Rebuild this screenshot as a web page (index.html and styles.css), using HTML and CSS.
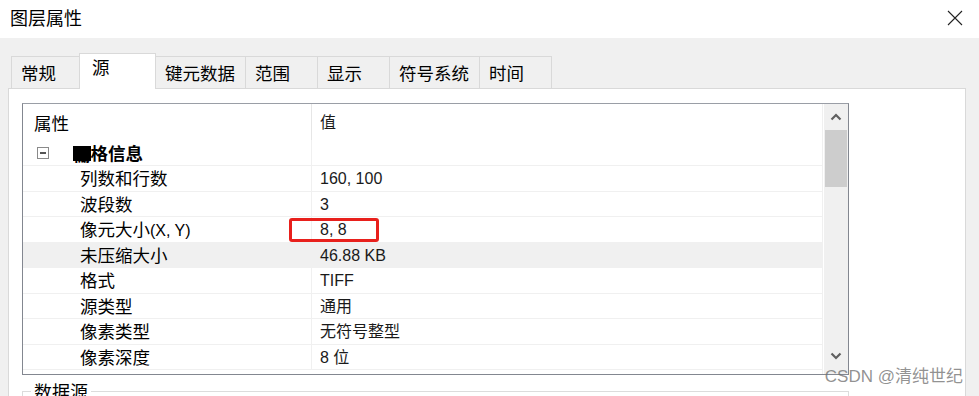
FILE: index.html
```html
<!DOCTYPE html>
<html lang="zh-CN">
<head>
    <meta charset="UTF-8">
    <title>图层属性</title>
    <link rel="stylesheet" href="styles.css">
</head>
<body>
    <div class="titlebar">
        <span class="title">图层属性</span>
        <svg class="close" width="16" height="16" viewBox="0 0 16 16">
            <path d="M1 1L15 15M15 1L1 15" stroke="#222" stroke-width="1.1" fill="none"/>
        </svg>
    </div>
    <div class="dialog">
        <div class="tabs">
            <div class="tab first">常规</div>
            <div class="tab active">源</div>
            <div class="tab">键元数据</div>
            <div class="tab">范围</div>
            <div class="tab">显示</div>
            <div class="tab">符号系统</div>
            <div class="tab">时间</div>
        </div>
        <div class="panel">
            <div class="grid">
                <div class="grid-body">
                    <div class="grid-head">
                        <div class="col-name">属性</div>
                        <div class="col-value">值</div>
                    </div>
                    <div class="row group">
                        <div class="col-name"><span class="toggle"></span><b><span class="blot">栅</span>格信息</b></div>
                        <div class="col-value"></div>
                    </div>
                    <div class="row">
                        <div class="col-name">列数和行数</div>
                        <div class="col-value">160, 100</div>
                    </div>
                    <div class="row">
                        <div class="col-name">波段数</div>
                        <div class="col-value">3</div>
                    </div>
                    <div class="row">
                        <div class="col-name">像元大小<span class="latin">(X, Y)</span></div>
                        <div class="col-value mark">8, 8<span class="highlight"></span></div>
                    </div>
                    <div class="row selected">
                        <div class="col-name">未压缩大小</div>
                        <div class="col-value">46.88 KB</div>
                    </div>
                    <div class="row">
                        <div class="col-name">格式</div>
                        <div class="col-value">TIFF</div>
                    </div>
                    <div class="row">
                        <div class="col-name">源类型</div>
                        <div class="col-value">通用</div>
                    </div>
                    <div class="row">
                        <div class="col-name">像素类型</div>
                        <div class="col-value">无符号整型</div>
                    </div>
                    <div class="row">
                        <div class="col-name">像素深度</div>
                        <div class="col-value">8 位</div>
                    </div>
                </div>
                <div class="scrollbar">
                    <div class="arrow">
                        <svg width="12" height="8" viewBox="0 0 12 8"><path d="M1.5 6.5L6 2L10.5 6.5" stroke="#606060" stroke-width="2.2" fill="none"/></svg>
                    </div>
                    <div class="thumb"></div>
                    <div class="track"></div>
                    <div class="arrow">
                        <svg width="12" height="8" viewBox="0 0 12 8"><path d="M1.5 1.5L6 6L10.5 1.5" stroke="#606060" stroke-width="2.2" fill="none"/></svg>
                    </div>
                </div>
            </div>
            <fieldset class="source">
                <legend>数据源</legend>
            </fieldset>
        </div>
    </div>
    <div class="watermark">CSDN @清纯世纪</div>
</body>
</html>
```

FILE: styles.css
```css
body {
    margin: 0;
    width: 979px;
    height: 396px;
    overflow: hidden;
    position: relative;
    background-color: #f0f0f0;
    font-family: "Liberation Sans", "Noto Sans CJK SC", sans-serif;
    color: #000;
}

.titlebar {
    height: 38px;
    background-color: white;
    display: flex;
    align-items: center;
    justify-content: space-between;
    padding: 0 16px 4px 10px;
    box-sizing: border-box;
}

.title {
    font-family: "Noto Sans CJK SC", sans-serif;
    font-size: 18px;
}

.close {
    margin-top: 2px;
}

.dialog {
    padding: 15px 13px 0 8px;
}

.tabs {
    display: flex;
    align-items: flex-end;
    height: 35px;
    padding-left: 3px;
}

.tab {
    height: 32px;
    box-sizing: border-box;
    min-width: 72px;
    padding: 3px 10px 0 9px;
    border: 1px solid #d9d9d9;
    border-bottom: none;
    border-left: none;
    background-color: #f0f0f0;
    font-family: "Noto Sans CJK SC", sans-serif;
    font-size: 17.5px;
    line-height: 26px;
}

.tab.first {
    border-left: 1px solid #d9d9d9;
    min-width: 69px;
}

.tab.active {
    min-width: 77px;
    padding: 0 0 0 12px;
    background-color: white;
    border-left: 1px solid #d9d9d9;
    margin-left: -1px;
    margin-bottom: -1px;
    position: relative;
    z-index: 1;
    height: 36px;
}

.panel {
    background-color: white;
    border: 1px solid #d9d9d9;
    height: 320px;
    padding: 14px 0 0 13px;
    box-sizing: border-box;
}

.grid {
    width: 827px;
    height: 272px;
    box-sizing: border-box;
    border: 1px solid #838790;
    border-top-color: #9a9ea6;
    display: flex;
}

.grid-body {
    width: 799px;
    border-right: 1px solid #f0f0f0;
}

.grid-head {
    display: flex;
    height: 36px;
    font-family: "Noto Sans CJK SC", sans-serif;
    font-size: 17.5px;
}

.grid-head .col-name {
    width: 289px;
    padding-left: 11px;
    border-right: 1px solid #e6e6e6;
    line-height: 38px;
    box-sizing: border-box;
}

.grid-head .col-value {
    padding-left: 8px;
    line-height: 38px;
}

.row {
    display: flex;
    height: 25.5px;
    box-sizing: border-box;
    border-bottom: 1px solid #f0f0f0;
}

.row.group {
    height: 26px;
}

.row.selected {
    background-color: #f0f0f0;
}

.col-name {
    width: 289px;
    box-sizing: border-box;
    border-right: 1px solid #f0f0f0;
    padding-left: 57px;
    font-family: "Noto Sans CJK SC", sans-serif;
    font-size: 17.5px;
    line-height: 24px;
    white-space: nowrap;
}

.col-value {
    padding-left: 8px;
    font-family: "Liberation Sans", "Noto Sans CJK SC", sans-serif;
    font-size: 16px;
    line-height: 25px;
    color: #1a1a1a;
    white-space: nowrap;
}

.latin {
    font-family: "Liberation Sans", sans-serif;
    font-size: 16px;
}

.group .col-name {
    padding-left: 14px;
    display: flex;
    align-items: center;
}

.group b {
    font-weight: bold;
    margin-left: 24px;
}

.blot {
    display: inline-block;
    height: 15px;
    line-height: 15px;
    vertical-align: -1px;
    background-color: #000;
    color: #000;
}

.toggle {
    width: 10px;
    height: 10px;
    border: 1px solid #8a8a8a;
    position: relative;
}

.toggle::after {
    content: "";
    position: absolute;
    left: 2px;
    top: 4px;
    width: 6px;
    height: 2px;
    background-color: #555;
}

.mark {
    position: relative;
}

.highlight {
    position: absolute;
    left: -23px;
    top: 1px;
    width: 90px;
    height: 24px;
    box-sizing: border-box;
    border: 3px solid #e8201c;
    border-radius: 3px;
}

.scrollbar {
    width: 24px;
    margin-left: 1px;
    background-color: #f0f0f0;
    display: flex;
    flex-direction: column;
}

.arrow {
    height: 26px;
    display: flex;
    align-items: center;
    justify-content: center;
}

.arrow:last-child {
    height: 32px;
    align-items: flex-start;
    padding-top: 10px;
    box-sizing: border-box;
}

.thumb {
    height: 57px;
    margin: 0 1px;
    background-color: #cdcdcd;
}

.track {
    flex: 1;
}

.source {
    width: 827px;
    box-sizing: border-box;
    margin: 4px 0 0;
    padding: 0;
    height: 30px;
    border: 1px solid #dcdcdc;
}

.source legend {
    margin-left: 8px;
    padding: 0 3px;
    font-family: "Noto Sans CJK SC", sans-serif;
    font-size: 18px;
    line-height: 24px;
}

.watermark {
    position: absolute;
    right: 16px;
    bottom: 9px;
    font-family: "Liberation Sans", "Noto Sans CJK SC", sans-serif;
    font-size: 17px;
    color: rgba(110, 110, 110, 0.75);
}
```
